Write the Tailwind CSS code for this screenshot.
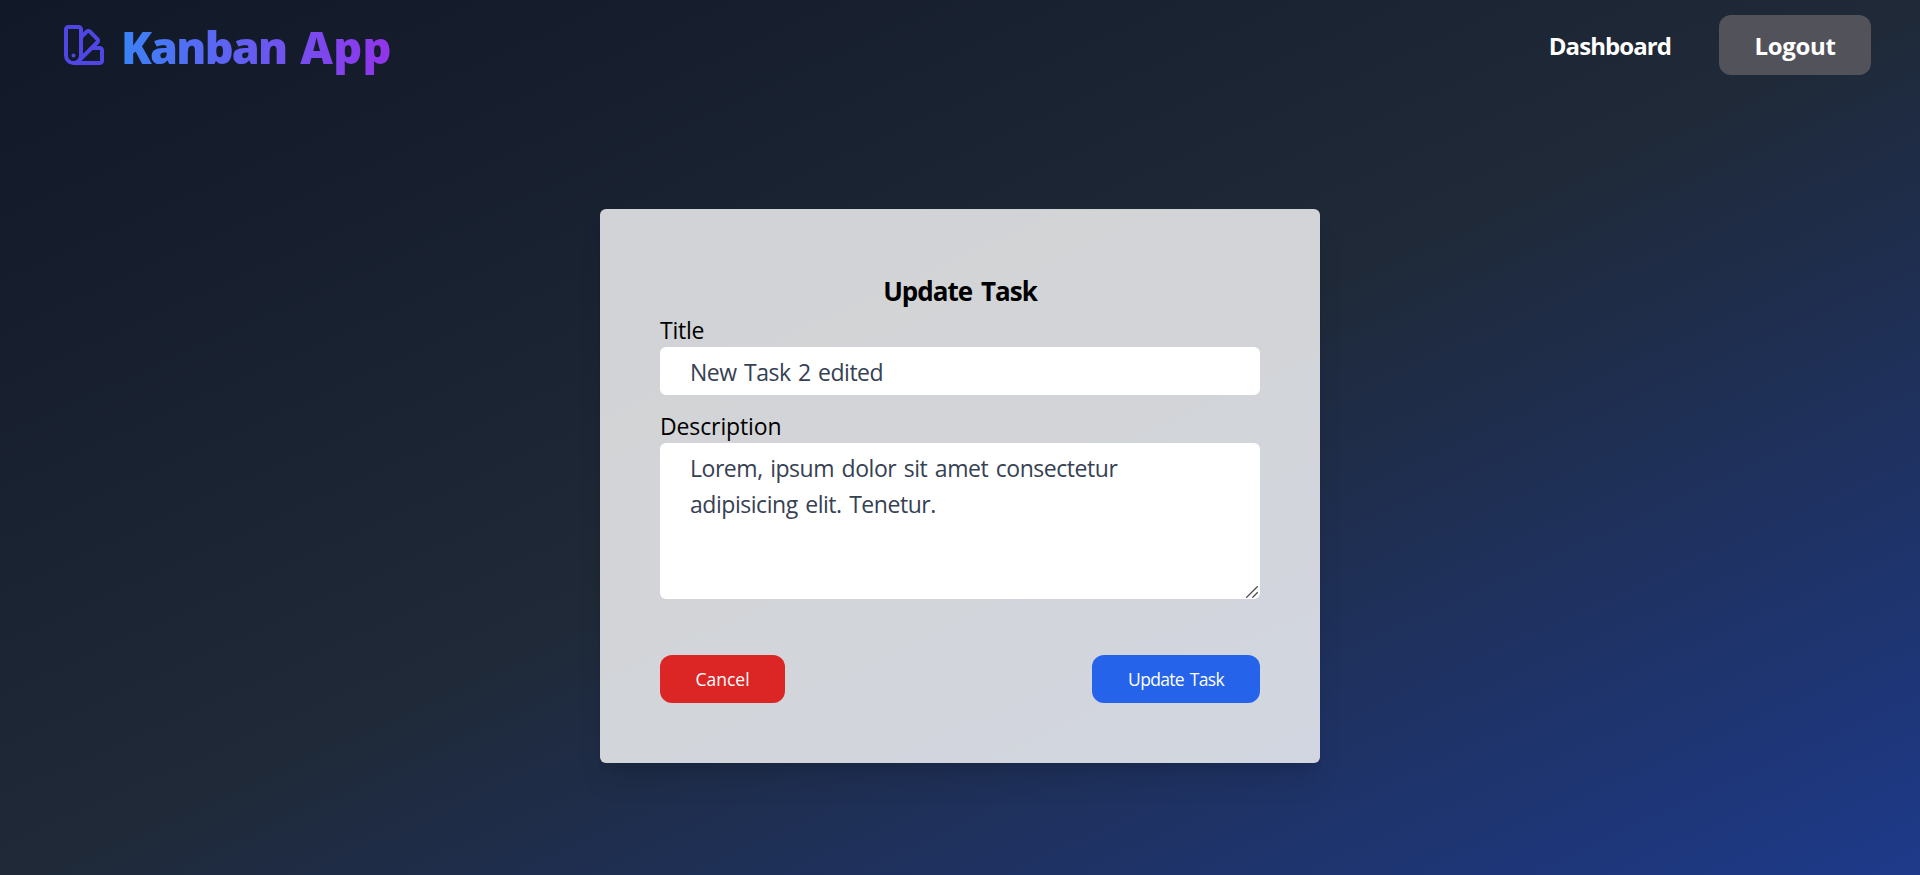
<!DOCTYPE html>
<html lang="en">
<head>
<meta charset="utf-8">
<title>Kanban App</title>
<script src="https://cdn.jsdelivr.net/npm/@tailwindcss/browser@4"></script>
</head>
<body class="font-['Open_Sans','Noto_Sans',sans-serif]">
<div class="flex h-[875px] flex-col overflow-hidden bg-[linear-gradient(to_bottom_right,#111827,#1f2937,#1e3a8a)]">
  <header class="flex h-[90px] shrink-0 items-start justify-between pl-[60px] pr-[49px]">
    <a class="flex items-start gap-[13px]">
      <svg class="mt-[21px] size-12 text-[#4f46e5]" viewBox="0 0 24 24" fill="none" stroke="currentColor" stroke-width="2" stroke-linecap="round" stroke-linejoin="round"><path d="M4.098 19.902a3.75 3.75 0 0 0 5.304 0l6.401-6.402M6.75 21A3.75 3.75 0 0 1 3 17.25V4.125C3 3.504 3.504 3 4.125 3h5.25c.621 0 1.125.504 1.125 1.125v4.072M6.75 21a3.75 3.75 0 0 0 3.75-3.75V8.197M6.75 21h13.125c.621 0 1.125-.504 1.125-1.125v-5.25c0-.621-.504-1.125-1.125-1.125h-4.072M10.5 8.197l2.88-2.88c.438-.439 1.15-.439 1.59 0l3.712 3.713c.44.439.44 1.152 0 1.59l-2.879 2.88M6.75 17.25h.008v.008H6.75v-.008Z"/></svg>
      <span class="mt-[17px] bg-[linear-gradient(to_right,#3b82f6,#9333ea)] bg-clip-text text-[45px] font-extrabold leading-[60px] tracking-[-1.8px] [word-spacing:4px] text-transparent">Kanban <span class="tracking-[0.3px]">App</span></span>
    </a>
    <nav class="flex items-center gap-12 pt-[15px] text-2xl font-bold text-white">
      <a class="pt-0.5 tracking-[-0.93px]">Dashboard</a>
      <button class="h-[60px] w-[152px] rounded-xl bg-[#52525b] pt-0.5 tracking-[-0.32px]">Logout</button>
    </nav>
  </header>
  <main class="flex justify-center pt-[119px]">
    <form class="h-[554px] w-[720px] rounded-md bg-white/80 p-[60px] shadow-[0_22px_28px_-6px_rgb(0_0_0/0.1),0_9px_11px_-7px_rgb(0_0_0/0.1)]">
      <h1 class="h-[42px] pt-px text-center text-[26px] font-bold leading-[42px] tracking-[-0.98px] [word-spacing:3px]">Update Task</h1>
      <label class="block h-9 pt-px text-[23px] leading-9 tracking-[-0.25px]" for="title">Title</label>
      <input id="title" class="block h-12 w-full rounded-md bg-white px-[30px] pt-0.5 text-[23px] tracking-[-0.5px] [word-spacing:2px] text-gray-700" value="New Task 2 edited">
      <label class="mt-3 block h-9 pt-px text-[23px] leading-9 tracking-[-0.12px]" for="description">Description</label>
      <div class="relative">
        <textarea id="description" class="block h-[156px] w-full resize-none rounded-md bg-white px-[30px] pb-1 pt-[7px] text-[23px] leading-9 tracking-[-0.46px] [word-spacing:2px] text-gray-700">Lorem, ipsum dolor sit amet consectetur adipisicing elit. Tenetur.</textarea>
        <svg class="absolute bottom-px right-0.5 size-3 text-[#4d4d4d]" viewBox="0 0 12 12" fill="none" stroke="currentColor" stroke-width="1.3"><path d="M.3 11.7 11.7.3M6.3 11.7l5.4-5.4"/></svg>
      </div>
      <div class="mt-14 flex justify-between text-[17.5px] text-white">
        <button type="button" class="h-12 w-[125px] rounded-xl bg-[#dc2626] pt-px tracking-[0px]">Cancel</button>
        <button type="button" class="h-12 w-[168px] rounded-xl bg-[#2563eb] pt-px tracking-[-0.69px] [word-spacing:2px]">Update Task</button>
      </div>
    </form>
  </main>
</div>
</body>
</html>
